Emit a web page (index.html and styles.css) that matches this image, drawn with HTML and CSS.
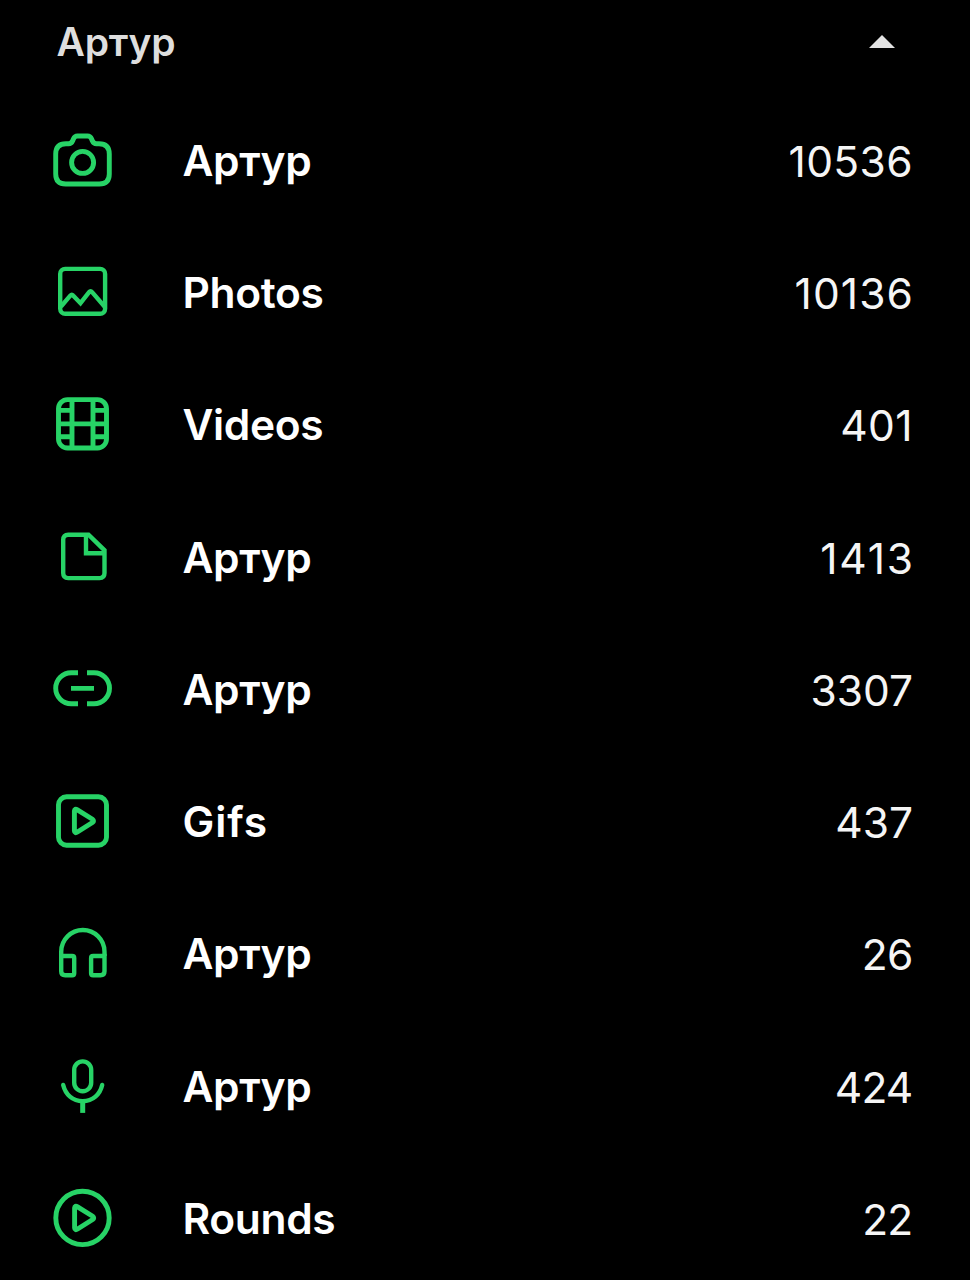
FILE: index.html
```html
<!DOCTYPE html>
<html lang="ru">
<head>
  <meta charset="UTF-8">
  <meta name="viewport" content="width=device-width, initial-scale=1.0">
  <title>Артур</title>
  <link rel="stylesheet" href="styles.css">
</head>
<body>
  <div class="panel">
    <div class="header">
      <span class="title">Артур</span>
      <svg class="arrow" viewBox="0 0 26 13"><path d="M0 13L13 0L26 13Z"/></svg>
    </div>
    <ul class="list">
      <li class="row">
        <svg class="icon bold" viewBox="0 0 64 64">
          <path d="M16 15.7H18.5C21 15.7 22 14.5 22.8 12.5L23.4 11Q24.6 8 27.5 8H37.5Q40.4 8 41.6 11L42.2 12.5C43 14.5 44 15.7 46.5 15.7H49Q59.3 15.7 59.3 26V46Q59.3 56 49.3 56H15.7Q5.7 56 5.7 46V26Q5.7 15.7 16 15.7Z"/>
          <circle cx="32.6" cy="34.4" r="11"/>
        </svg>
        <span class="name">Артур</span>
        <span class="count wide">10536</span>
      </li>
      <li class="row">
        <svg class="icon" viewBox="0 0 64 64">
          <rect x="10.2" y="8.9" width="44.9" height="44.9" rx="5"/>
          <path d="M11 46.5L20.5 35.4Q21.8 33.9 23.1 35.4L30.5 43.2L39.1 32.2Q40.6 30.3 42.1 32.2L54.5 46.5"/>
        </svg>
        <span class="name">Photos</span>
        <span class="count wider">10136</span>
      </li>
      <li class="row">
        <svg class="icon bold" viewBox="0 0 64 64">
          <rect x="8.5" y="7.6" width="48" height="48.4" rx="9"/>
          <path d="M22 7.6V56M43 7.6V56M8.5 31.9H56.5M8.5 18.4H22M8.5 44.8H22M43 18.4H56.5M43 44.8H56.5"/>
        </svg>
        <span class="name">Videos</span>
        <span class="count wide">401</span>
      </li>
      <li class="row">
        <svg class="icon" viewBox="0 0 64 64">
          <path d="M18.2 9.7H38.5L54.5 25.3V48.1Q54.5 53.1 49.5 53.1H18.2Q13.2 53.1 13.2 48.1V14.7Q13.2 9.7 18.2 9.7Z"/>
          <path d="M36 10V28.3H54.5"/>
        </svg>
        <span class="name">Артур</span>
        <span class="count widest">1413</span>
      </li>
      <li class="row">
        <svg class="icon bold" viewBox="0 0 64 64">
          <path d="M28 15.8H21.2A15.5 15.5 0 0 0 21.2 46.8H28M37 15.8H44A15.5 15.5 0 0 1 44 46.8H37M21 31.4H44"/>
        </svg>
        <span class="name">Артур</span>
        <span class="count">3307</span>
      </li>
      <li class="row">
        <svg class="icon bold" viewBox="0 0 64 64">
          <rect x="8.5" y="7.8" width="48" height="48.4" rx="8"/>
          <path d="M24.4 22V41.8Q24.6 44.8 27.4 43L42.4 33.6Q44.6 31.9 42.4 30.2L27.4 20.8Q24.6 19 24.4 22Z"/>
        </svg>
        <span class="name loose">Gifs</span>
        <span class="count">437</span>
      </li>
      <li class="row">
        <svg class="icon" viewBox="0 0 64 64">
          <path d="M11.2 35V30.7A21.65 21.65 0 0 1 54.5 30.7V35"/>
          <path d="M11.2 35H22.2Q24.2 35 24.2 37V52.3Q24.2 54.3 22.2 54.3H15.2Q11.2 54.3 11.2 50.3ZM54.5 35H43.1Q41.1 35 41.1 37V52.3Q41.1 54.3 43.1 54.3H50.5Q54.5 54.3 54.5 50.3Z"/>
        </svg>
        <span class="name">Артур</span>
        <span class="count tight">26</span>
      </li>
      <li class="row">
        <svg class="icon" viewBox="0 0 64 64">
          <rect x="24.2" y="7.4" width="17" height="29.9" rx="8.5"/>
          <path class="round" d="M13.2 31C15.5 40.5 22.5 47.2 32.7 47.2S50 40.5 52.2 31"/>
          <path class="stem" d="M32.7 47V58.9"/>
        </svg>
        <span class="name">Артур</span>
        <span class="count tight">424</span>
      </li>
      <li class="row">
        <svg class="icon bold" viewBox="0 0 64 64">
          <circle cx="32.5" cy="31.9" r="26.7"/>
          <path d="M24.6 22V41.8Q24.8 44.8 27.6 43L42.6 33.6Q44.8 31.9 42.6 30.2L27.6 20.8Q24.8 19 24.6 22Z"/>
        </svg>
        <span class="name">Rounds</span>
        <span class="count tight">22</span>
      </li>
    </ul>
  </div>
</body>
</html>
```
FILE: styles.css
```css
body {
  margin: 0;
  background: #000;
  color: #fff;
  font-family: Inter, "Open Sans", sans-serif;
}

.panel {
  height: 1280px;
  overflow: hidden;
}

.header {
  display: flex;
  align-items: center;
  justify-content: space-between;
  box-sizing: border-box;
  height: 93.6px;
  padding: 0 75px 11px 56.5px;
}

.title {
  font-size: 39px;
  font-weight: 600;
  letter-spacing: -0.2px;
  color: #dedede;
}

.arrow {
  width: 26px;
  height: 13px;
  fill: #e2e2e2;
}

.list {
  list-style: none;
  margin: 0;
  padding: 0;
}

.row {
  display: flex;
  align-items: center;
  box-sizing: border-box;
  height: 132.28px;
  padding: 0 57px 0 50px;
}

.icon {
  width: 64px;
  height: 64px;
  margin-right: 68.5px;
  fill: none;
  stroke: #27d366;
  stroke-width: 4.4;
}

.bold {
  stroke-width: 4.9;
}

.round {
  stroke-linecap: round;
}

.stem {
  stroke-width: 5;
}

.name {
  flex: 1;
  padding-top: 1px;
  font-size: 42.5px;
  font-weight: 600;
  letter-spacing: -0.35px;
}

.loose {
  letter-spacing: 0.9px;
}

.count {
  padding-top: 3px;
  font-size: 42.5px;
  color: #f5f5f5;
}

/* narrow 1s need extra tracking */
.wide {
  letter-spacing: 0.4px;
}

.wider {
  letter-spacing: 1.1px;
  margin-right: -1px;
}

.widest {
  letter-spacing: 1.8px;
  margin-right: -1.8px;
}

.tight {
  letter-spacing: -0.8px;
  margin-right: 0.5px;
}
```
